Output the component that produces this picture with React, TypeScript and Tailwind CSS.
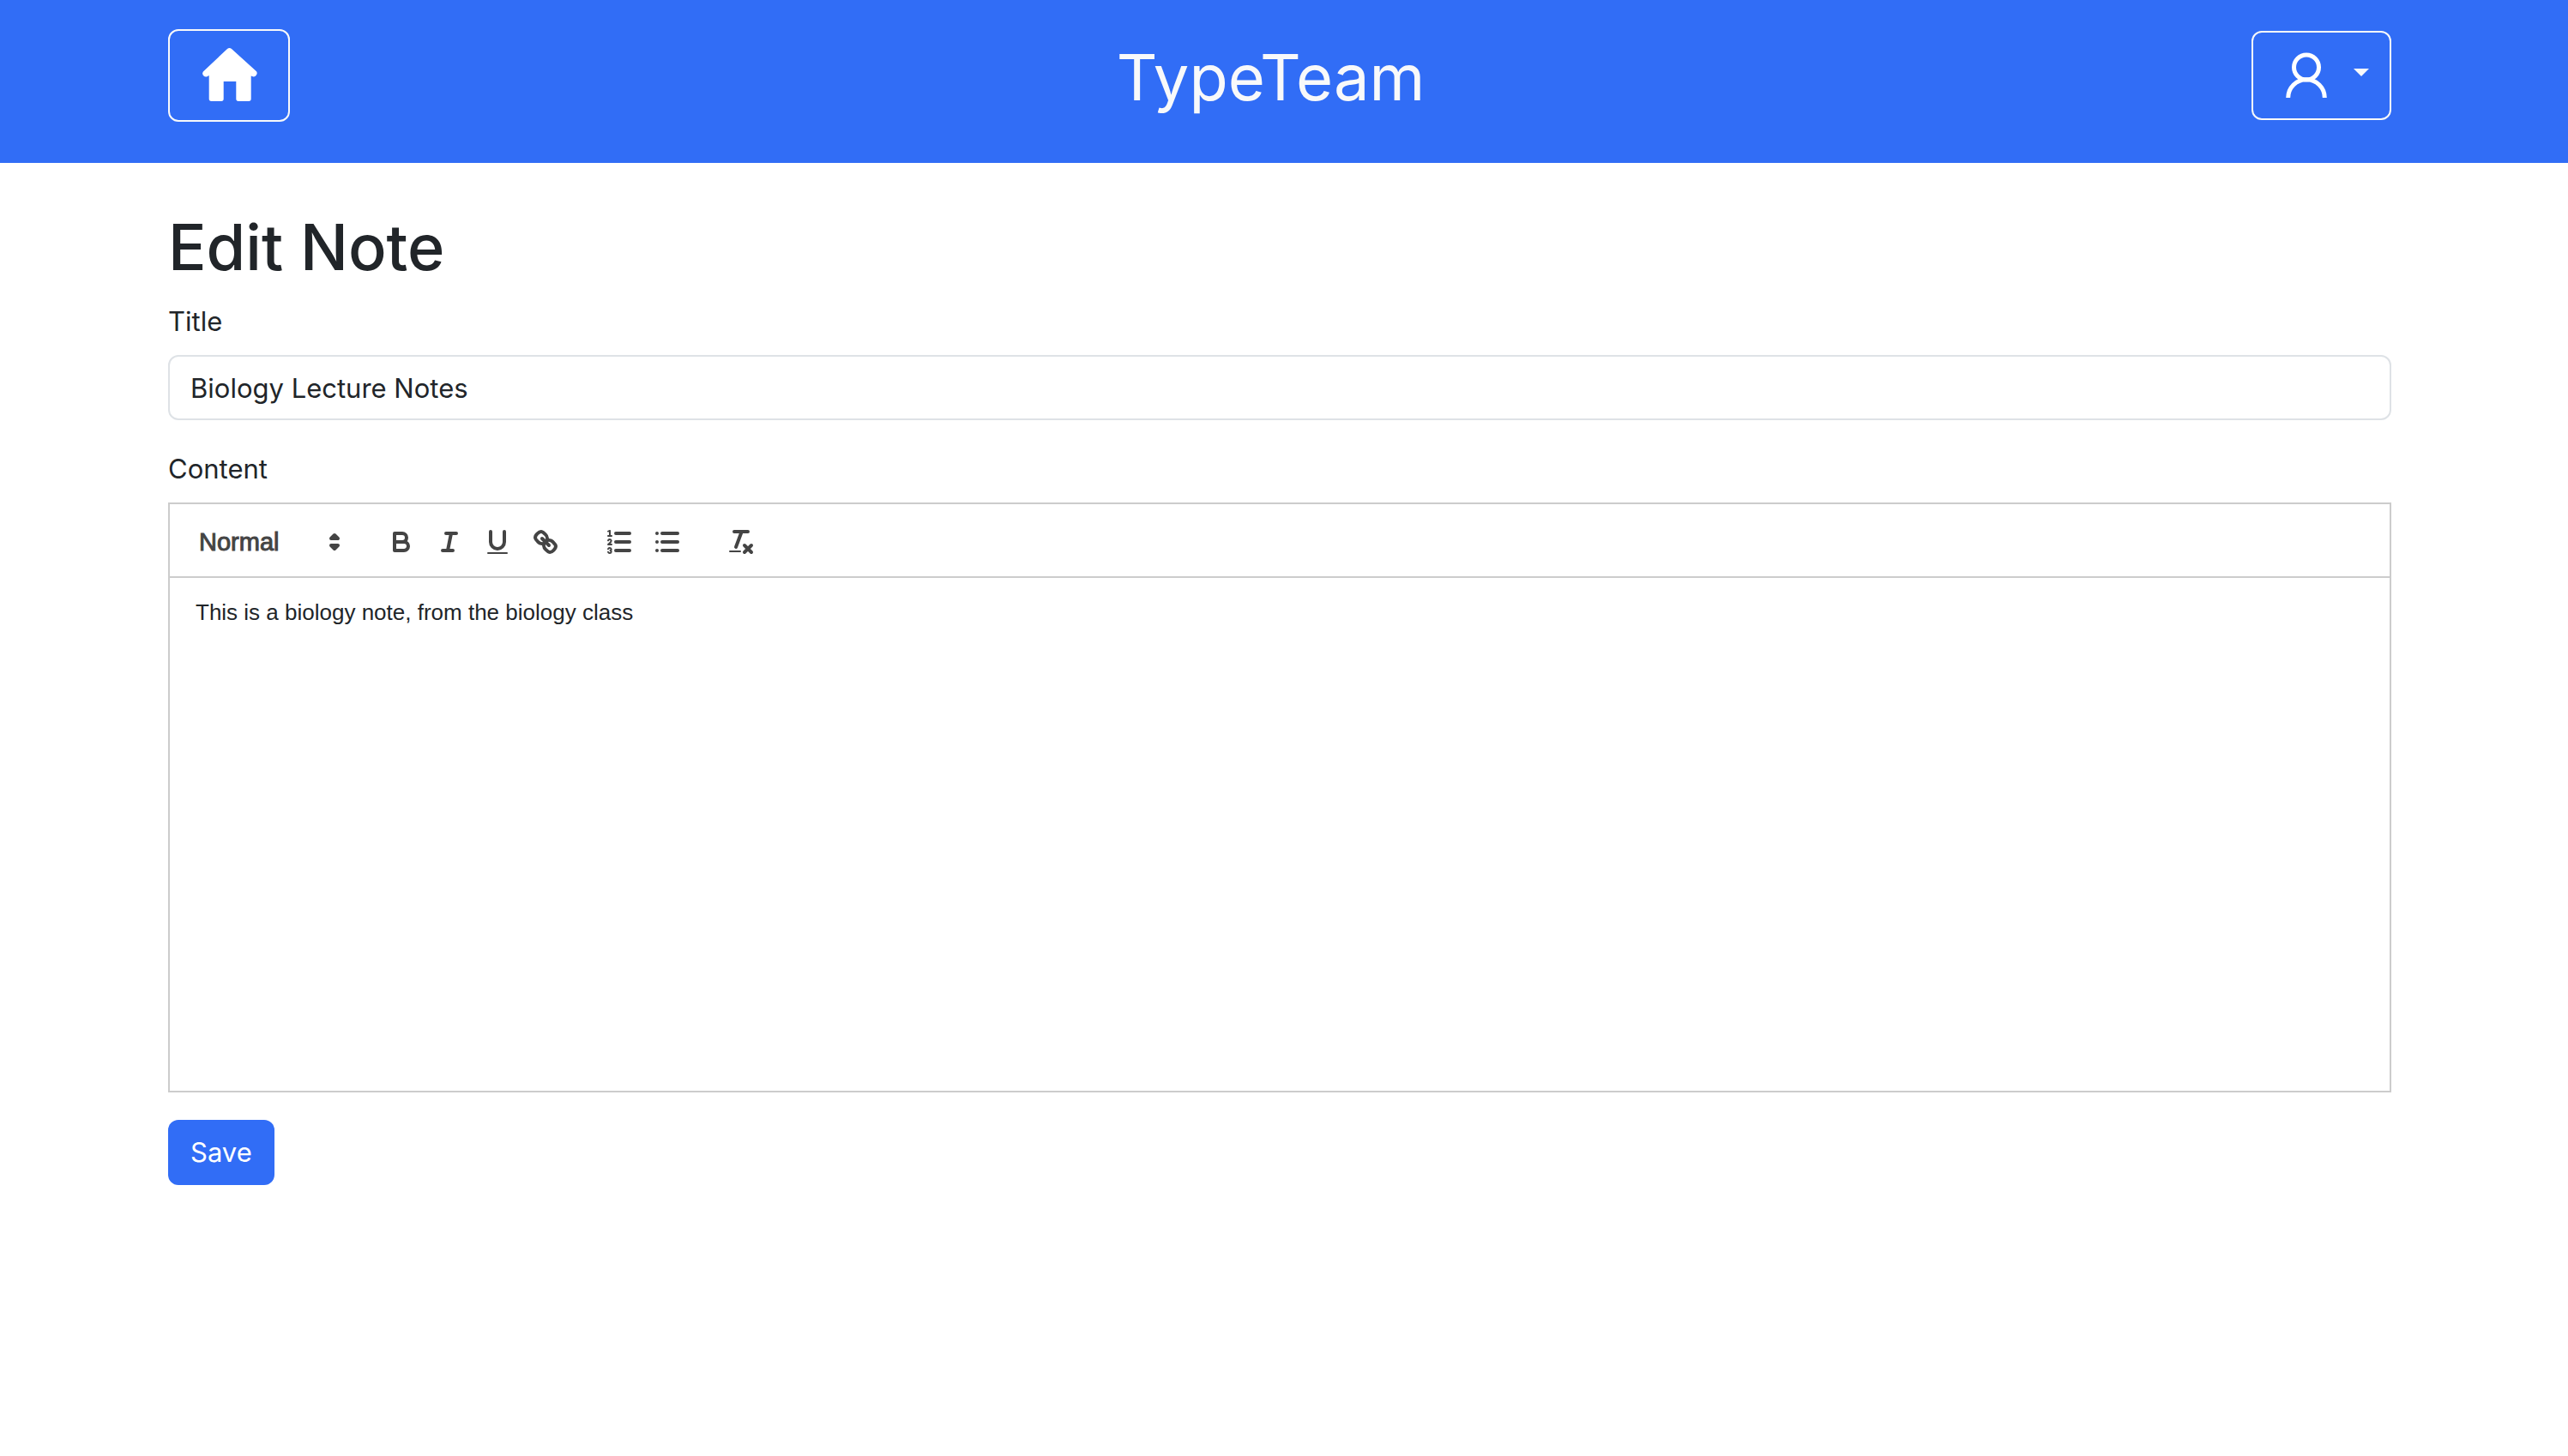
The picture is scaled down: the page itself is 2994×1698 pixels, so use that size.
import { useState, type ReactNode } from "react";

function Container({ children, className = "" }: { children: ReactNode; className?: string }) {
  return (
    <div className="pr-[10px]">
      <div className={`mx-auto w-full max-w-[2640px] px-6 ${className}`}>{children}</div>
    </div>
  );
}

function HouseIcon() {
  return (
    <svg viewBox="0 0 90 80" className="h-20 w-[90px]" fill="white" aria-hidden="true">
      <path d="M43 8.9 Q45.5 7 48 8.9 L75.6 34 A3.9 3.9 0 0 1 71.4 40.8 L70.7 40.4 V67.2 Q70.7 69.9 68 69.9 H56 Q53.3 69.9 53.3 67.2 V47 H38.7 V67.2 Q38.7 69.9 36 69.9 H24.4 Q21.7 69.9 21.7 67.2 V40 L20 41 A3.9 3.9 0 0 1 14.9 35.4 Z" />
    </svg>
  );
}

function PersonIcon() {
  return (
    <svg viewBox="0 0 76 76" className="size-[76px]" fill="none" stroke="white" strokeWidth="5" aria-hidden="true">
      <circle cx="38" cy="28.5" r="14.5" />
      <path d="M16.7 64 A21.3 21.3 0 0 1 59.3 64" />
    </svg>
  );
}

function Header() {
  return (
    <header className="bg-[#316df6] pt-[34px] pb-12">
      <Container className="flex items-center justify-between">
        <a href="#home" aria-label="Home" className="rounded-xl border-2 border-[#f8f9fa] px-6 py-3">
          <HouseIcon />
        </a>
        <div className="pt-1 text-[74px] leading-[100px] text-[#f8f9fa]">TypeTeam</div>
        <button type="button" aria-label="Account menu" className="flex items-center rounded-xl border-2 border-[#f8f9fa] px-6 py-3">
          <PersonIcon />
          <svg viewBox="0 0 18 9" className="mb-2 ml-[17px] h-[9px] w-[18px]" fill="#f8f9fa" aria-hidden="true">
            <path d="M0 0H18L9 9Z" />
          </svg>
        </button>
      </Container>
    </header>
  );
}

function ToolButton({ label, children }: { label: string; children: ReactNode }) {
  return (
    <button type="button" aria-label={label} className="h-12 w-14 px-[10px] py-[6px]">
      <svg
        viewBox="0 0 18 18"
        className="size-9"
        fill="none"
        stroke="#444444"
        strokeWidth="2"
        strokeLinecap="round"
        strokeLinejoin="round"
        aria-hidden="true"
      >
        {children}
      </svg>
    </button>
  );
}

function Toolbar() {
  return (
    <div role="toolbar" aria-label="Formatting" className="flex gap-[30px] border-2 border-[#cccccc] px-4 pt-5 pb-4">
      <div className="relative h-12 w-[196px]">
        <select
          aria-label="Text style"
          className="h-12 w-full appearance-none bg-transparent pl-[18px] font-['Liberation_Sans',Arial,sans-serif] text-[29px] leading-[48px] text-[#444444] [-webkit-text-stroke:1px_#444444]"
        >
          <option>Normal</option>
        </select>
        <svg
          viewBox="0 0 18 18"
          className="pointer-events-none absolute top-[6px] right-[2px] size-9"
          fill="#444444"
          stroke="#444444"
          strokeWidth="2"
          strokeLinecap="round"
          strokeLinejoin="round"
          aria-hidden="true"
        >
          <polygon points="7 11 9 13 11 11" />
          <polygon points="7 7 9 5 11 7" />
        </svg>
      </div>
      <div className="flex">
        <ToolButton label="Bold">
          <path d="M5,4H9.5A2.5,2.5,0,0,1,12,6.5v0A2.5,2.5,0,0,1,9.5,9H5Z" />
          <path d="M5,9h5.5A2.5,2.5,0,0,1,13,11.5v0A2.5,2.5,0,0,1,10.5,14H5Z" />
        </ToolButton>
        <ToolButton label="Italic">
          <path d="M7 4H13M5 14H11M8 14L10 4" />
        </ToolButton>
        <ToolButton label="Underline">
          <path d="M5,3V9a4.012,4.012,0,0,0,4,4H9a4.012,4.012,0,0,0,4-4V3" />
          <rect x="3" y="15" width="12" height="1" rx="0.5" fill="#444444" stroke="none" />
        </ToolButton>
        <ToolButton label="Link">
          <path d="M7 7L11 11" />
          <path d="M8.9,4.577a3.476,3.476,0,0,1,.36,4.679A3.476,3.476,0,0,1,4.577,8.9C3.185,7.5,2.035,6.4,4.217,4.217S7.5,3.185,8.9,4.577Z" />
          <path d="M13.423,9.1a3.476,3.476,0,0,0-4.679-.36,3.476,3.476,0,0,0,.36,4.679c1.392,1.392,2.5,2.542,4.679.36S14.815,10.5,13.423,9.1Z" />
        </ToolButton>
      </div>
      <div className="flex">
        <ToolButton label="Numbered list">
          <path d="M7 4H15M7 9H15M7 14H15" />
          <path strokeWidth="1" d="M2.5 5.5H4.5" />
          <path
            fill="#444444"
            stroke="none"
            d="M3.5,6A0.5,0.5,0,0,1,3,5.5V3.085l-0.276.138A0.5,0.5,0,0,1,2.053,3c-0.124-.247-0.023-0.324.224-0.447l1-.5A0.5,0.5,0,0,1,4,2.5v3A0.5,0.5,0,0,1,3.5,6Z"
          />
          <path strokeWidth="1" d="M4.5,10.5h-2c0-.234,1.85-1.076,1.85-2.234A0.959,0.959,0,0,0,2.5,8.156" />
          <path
            strokeWidth="1"
            d="M2.5,14.846a0.959,0.959,0,0,0,1.85-.109A0.7,0.7,0,0,0,3.75,14a0.688,0.688,0,0,0,.6-0.736,0.959,0.959,0,0,0-1.85-.109"
          />
        </ToolButton>
        <ToolButton label="Bulleted list">
          <path d="M6 4H15M6 9H15M6 14H15M3 4H3M3 9H3M3 14H3" />
        </ToolButton>
      </div>
      <div className="flex">
        <ToolButton label="Clear formatting">
          <path d="M5 3H13M6 12L9.35 3M11 11L15 15M15 11L11 15" />
          <rect x="2" y="14" width="7" height="1" rx="0.5" fill="#444444" stroke="none" />
        </ToolButton>
      </div>
    </div>
  );
}

export default function App() {
  const [title, setTitle] = useState("Biology Lecture Notes");
  const [content, setContent] = useState("This is a biology note, from the biology class");

  return (
    <div className="min-h-screen bg-white font-[Inter,sans-serif] text-[#212529]">
      <Header />
      <main className="pt-12">
        <Container>
          <h1 className="mb-3 text-[74px] leading-[100px] font-medium">Edit Note</h1>
          <form onSubmit={(e) => e.preventDefault()}>
            <label htmlFor="title" className="mb-[14px] block text-[31px] leading-[50px]">
              Title
            </label>
            <input
              id="title"
              value={title}
              onChange={(e) => setTitle(e.target.value)}
              className="mb-8 block h-[76px] w-full rounded-xl border-2 border-[#dee2e6] px-6 text-[31px] leading-[50px]"
            />
            <label htmlFor="content" className="mb-[14px] block text-[31px] leading-[50px]">
              Content
            </label>
            <Toolbar />
            <textarea
              id="content"
              value={content}
              onChange={(e) => setContent(e.target.value)}
              className="mb-8 block h-[600px] w-full resize-none border-2 border-t-0 border-[#cccccc] px-[30px] py-[22px] font-['Liberation_Sans',Arial,sans-serif] text-[26px] leading-[37px]"
            />
            <button type="submit" className="h-[76px] rounded-xl bg-[#316df6] px-[26px] text-[31px] leading-[50px] text-white">
              Save
            </button>
          </form>
        </Container>
      </main>
    </div>
  );
}
